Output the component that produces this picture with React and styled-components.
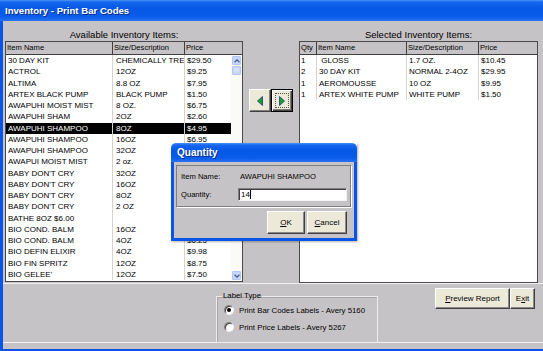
import React from "react";
import styled, { createGlobalStyle } from "styled-components";

const GlobalStyle = createGlobalStyle`
  html, body {
    margin: 0;
    padding: 0;
    background: #c6c3c6;
  }
  body {
    font-family: "Liberation Sans", Arial, sans-serif;
  }
`;

const XP_BLUE = "#0b55e6";

const Window = styled.div`
  position: relative;
  width: 543px;
  height: 351px;
  display: flex;
  flex-direction: column;
  background: #c6c3c6;
  overflow: hidden;
`;

const TitleBar = styled.div`
  height: 21px;
  flex: none;
  display: flex;
  align-items: center;
  padding-left: 5px;
  background: linear-gradient(
    to bottom,
    #4a96fa 0,
    #1767ee 2px,
    #0558e6 40%,
    #0a5ceb 80%,
    #2b72f0 100%
  );
  color: #fff;
  font: bold 9.6px "Liberation Sans", Arial, sans-serif;
  text-shadow: 1px 1px 0 #0a2c84;
`;

const Body = styled.div`
  flex: 1;
  display: flex;
  flex-direction: column;
  border-left: 3px solid ${XP_BLUE};
  border-bottom: 2px solid ${XP_BLUE};
  padding-bottom: 6px;
`;

const TopArea = styled.div`
  height: 262px;
  display: grid;
  grid-template-columns: 238px 56px 239px;
  padding-left: 2px;
`;

const Panel = styled.div`
  display: flex;
  flex-direction: column;
`;

const Caption = styled.div`
  height: 20px;
  box-sizing: border-box;
  display: flex;
  align-items: flex-end;
  justify-content: center;
  padding-bottom: 1.5px;
  font-size: 9.5px;
  line-height: 11px;
  color: #000;
`;

const ListBox = styled.div`
  height: ${(p) => p.$h}px;
  box-sizing: border-box;
  border: 1px solid #4a4a4a;
  background: #fff;
  display: flex;
  flex-direction: column;
  overflow: hidden;
`;

const HeaderRow = styled.div`
  display: grid;
  grid-template-columns: ${(p) => p.$cols};
  height: 13px;
  box-sizing: border-box;
  background: #c6c3c6;
  border-bottom: 1px solid #404040;
  flex: none;
`;

const HeaderCell = styled.div`
  border-right: 1px solid #404040;
  font-size: 7.6px;
  line-height: 12px;
  padding-left: 1px;
  white-space: nowrap;
  overflow: hidden;
  &:last-child {
    border-right: none;
  }
`;

const ListMain = styled.div`
  flex: 1;
  display: flex;
  min-height: 0;
`;

const Rows = styled.div`
  flex: 1;
  display: flex;
  flex-direction: column;
`;

const Row = styled.div`
  display: grid;
  grid-template-columns: ${(p) => p.$cols};
  height: 11.25px;
  flex: none;
  background: ${(p) => (p.$selected ? "#000" : "transparent")};
  color: ${(p) => (p.$selected ? "#fff" : "#000")};
`;

const Cell = styled.div`
  font-size: 8px;
  line-height: 11.25px;
  padding-left: ${(p) => p.$pad ?? 2}px;
  white-space: pre;
  overflow: hidden;
  border-right: 1px solid #d6d3ce;
  &:last-child {
    border-right: none;
  }
`;

const ScrollBar = styled.div`
  width: 11px;
  flex: none;
  background: #fafaf6;
  display: flex;
  flex-direction: column;
  align-items: center;
  padding: 1px 0;
  box-sizing: border-box;
`;

const ScrollBtn = styled.div`
  width: 9px;
  height: 9px;
  box-sizing: border-box;
  border: 1px solid #b4c6f2;
  border-radius: 1px;
  background: #c6d6fc;
  display: flex;
  align-items: center;
  justify-content: center;
  margin-top: ${(p) => p.$mt || 0}px;
`;

const Track = styled.div`
  flex: 1;
`;

const Middle = styled.div`
  display: flex;
  justify-content: center;
  align-items: flex-start;
  padding-top: 68px;
`;

const ArrowButton = styled.div`
  position: relative;
  width: 22px;
  height: 23px;
  box-sizing: border-box;
  background: #ece9d8;
  display: flex;
  align-items: center;
  justify-content: center;
  border: 1px solid;
  border-color: ${(p) => (p.$focused ? "#000" : "#fff #404040 #404040 #fff")};
  box-shadow: ${(p) =>
    p.$focused
      ? "inset 1px 1px #fff, inset -1px -1px #404040, inset -2px -2px #808080"
      : "inset -1px -1px #808080"};
  ${(p) =>
    p.$focused &&
    `&::after {
      content: "";
      position: absolute;
      inset: 3px;
      border: 1px dotted #555;
    }`}
`;

const BottomPanel = styled.div`
  height: 58px;
  border-top: 1px solid #f2f2f2;
  border-bottom: 1px solid #f2f2f2;
  display: flex;
  align-items: flex-start;
`;

const GroupBox = styled.fieldset`
  margin: 7px 0 0 213px;
  width: 162px;
  height: 52px;
  box-sizing: border-box;
  border: 1px solid #ededed;
  box-shadow: inset 1px 1px 0 #a9a6a9;
  padding: 4px 0 0 7px;
  display: flex;
  flex-direction: column;
  gap: 7px;
`;

const Legend = styled.legend`
  font-size: 7.8px;
  line-height: 10px;
  padding: 0 1px;
  margin-left: -2px;
`;

const RadioRow = styled.div`
  display: flex;
  align-items: center;
  gap: 5px;
  height: 10px;
  font-size: 7.8px;
`;

const Radio = styled.span`
  width: 10px;
  height: 10px;
  box-sizing: border-box;
  border-radius: 50%;
  background: #fff;
  border: 1px solid;
  border-color: #808080 #f4f4f4 #f4f4f4 #808080;
  box-shadow: inset 1px 1px #404040;
  display: flex;
  align-items: center;
  justify-content: center;
  &::after {
    content: "";
    width: 4px;
    height: 4px;
    border-radius: 50%;
    background: ${(p) => (p.$checked ? "#000" : "transparent")};
  }
`;

const ButtonGroup = styled.div`
  display: flex;
  margin: 4px 8px 0 auto;
`;

const Button = styled.div`
  width: ${(p) => p.$w}px;
  height: ${(p) => p.$h || 21}px;
  box-sizing: border-box;
  background: #ece9d8;
  border: 1px solid;
  border-color: #fff #404040 #404040 #fff;
  box-shadow: inset -1px -1px #8a8a8a;
  display: flex;
  align-items: center;
  justify-content: center;
  font-size: 8px;
  color: #000;
  u {
    text-decoration: underline;
  }
`;

const Dialog = styled.div`
  position: absolute;
  left: 171px;
  top: 143px;
  width: 186px;
  height: 98px;
  display: flex;
  flex-direction: column;
  box-shadow: 1px 1px 2px rgba(0, 0, 0, 0.3);
`;

const DialogTitle = styled.div`
  height: 19px;
  flex: none;
  display: flex;
  align-items: center;
  padding-left: 6px;
  border-radius: 5px 5px 0 0;
  background: linear-gradient(
    to bottom,
    #4a96fa 0,
    #1767ee 2px,
    #0558e6 40%,
    #0a5ceb 80%,
    #2b72f0 100%
  );
  color: #fff;
  font: bold 10px "Liberation Sans", Arial, sans-serif;
  text-shadow: 1px 1px 0 #0a2c84;
`;

const DialogBody = styled.div`
  flex: 1;
  background: #c6c3c6;
  border: 3px solid ${XP_BLUE};
  border-top: none;
  display: flex;
  flex-direction: column;
  padding: 3px 2px 0 2px;
`;

const FieldsPanel = styled.div`
  border: 1px solid;
  border-color: #808080 #fff #fff #808080;
  box-shadow: inset -1px -1px #808080;
  padding: 5px 0 6px 4px;
  display: flex;
  flex-direction: column;
  gap: 6px;
`;

const FieldRow = styled.div`
  display: grid;
  grid-template-columns: 57px 109px;
  align-items: center;
  height: ${(p) => p.$h}px;
  font-size: 7.6px;
`;

const FieldValue = styled.div`
  padding-left: 2px;
`;

const TextInput = styled.div`
  height: 13px;
  box-sizing: border-box;
  background: #fff;
  border: 1px solid;
  border-color: #808080 #f4f4f4 #f4f4f4 #808080;
  box-shadow: inset 1px 1px #404040;
  padding-left: 2px;
  font-size: 8px;
  line-height: 11px;
  display: flex;
  align-items: center;
`;

const Caret = styled.span`
  display: inline-block;
  width: 1px;
  height: 9px;
  background: #000;
  margin-left: 0.5px;
`;

const DialogButtons = styled.div`
  display: flex;
  justify-content: flex-end;
  gap: 2px;
  padding: 3px 5px 0 0;
`;

const leftCols = "107px 72px 45px";
const leftHead = "107px 72px 1fr";
const rightCols = "17px 90px 72px 1fr";

// prices of the rows hidden behind the Quantity dialog are left blank
const available = [
  ["30 DAY KIT", "CHEMICALLY TREA", "$29.50"],
  ["ACTROL", "12OZ", "$9.25"],
  ["ALTIMA", "8.8 OZ", "$7.95"],
  ["ARTEX BLACK PUMP", "BLACK PUMP", "$1.50"],
  ["AWAPUHI MOIST MIST", "8 OZ.", "$6.75"],
  ["AWAPUHI SHAM", "2OZ", "$2.60"],
  ["AWAPUHI SHAMPOO", "8OZ", "$4.95"],
  ["AWAPUHI SHAMPOO", "16OZ", "$6.95"],
  ["AWAPUHI SHAMPOO", "32OZ", ""],
  ["AWAPUI MOIST MIST", "2 oz.", ""],
  ["BABY DON'T CRY", "32OZ", ""],
  ["BABY DON'T CRY", "16OZ", ""],
  ["BABY DON'T CRY", "8OZ", ""],
  ["BABY DON'T CRY", "2 OZ", ""],
  ["BATHE 8OZ $6.00", "", ""],
  ["BIO COND. BALM", "16OZ", ""],
  ["BIO COND. BALM", "4OZ", "$6.25"],
  ["BIO DEFIN ELIXIR", "4OZ", "$9.98"],
  ["BIO FIN SPRITZ", "12OZ", "$8.75"],
  ["BIO GELEE'", "12OZ", "$7.50"],
];

const selected = [
  ["1", " GLOSS", "1.7 OZ.", "$10.45"],
  ["2", "30 DAY KIT", "NORMAL 2-4OZ", "$29.95"],
  ["1", "AEROMOUSSE", "10 OZ", "$9.95"],
  ["1", "ARTEX WHITE PUMP", "WHITE PUMP", "$1.50"],
];

const Chevron = ({ down }) => (
  <svg width="6" height="4" viewBox="0 0 6 4">
    <path
      d={down ? "M0.6 0.8 L3 3.2 L5.4 0.8" : "M0.6 3.2 L3 0.8 L5.4 3.2"}
      fill="none"
      stroke="#4d6185"
      strokeWidth="1.3"
    />
  </svg>
);

const Thumb = () => (
  <ScrollBtn $mt={1}>
    <svg width="5" height="5" viewBox="0 0 5 5">
      <path d="M0 1h5M0 3h5" stroke="#e8eeff" strokeWidth="0.8" />
    </svg>
  </ScrollBtn>
);

const Triangle = ({ dir }) => (
  <svg width="6" height="10" viewBox="0 0 6 10">
    <polygon
      points={dir === "left" ? "5.5,0.5 5.5,9.5 0.5,5" : "0.5,0.5 0.5,9.5 5.5,5"}
      fill="#1b9c2b"
      stroke="#143f7a"
      strokeWidth="0.8"
    />
  </svg>
);

export default function App() {
  return (
    <>
      <GlobalStyle />
      <Window>
        <TitleBar>Inventory - Print Bar Codes</TitleBar>
        <Body>
          <TopArea>
            <Panel>
              <Caption>Available Inventory Items:</Caption>
              <ListBox $h={241}>
                <HeaderRow $cols={leftHead}>
                  <HeaderCell>Item Name</HeaderCell>
                  <HeaderCell>Size/Description</HeaderCell>
                  <HeaderCell>Price</HeaderCell>
                </HeaderRow>
                <ListMain>
                  <Rows>
                    {available.map((r, i) => (
                      <Row key={i} $cols={leftCols} $selected={i === 6}>
                        <Cell>{r[0]}</Cell>
                        <Cell $pad={3}>{r[1]}</Cell>
                        <Cell>{r[2]}</Cell>
                      </Row>
                    ))}
                  </Rows>
                  <ScrollBar>
                    <ScrollBtn>
                      <Chevron />
                    </ScrollBtn>
                    <Thumb />
                    <Track />
                    <ScrollBtn>
                      <Chevron down />
                    </ScrollBtn>
                  </ScrollBar>
                </ListMain>
              </ListBox>
            </Panel>

            <Middle>
              <ArrowButton>
                <Triangle dir="left" />
              </ArrowButton>
              <ArrowButton $focused>
                <Triangle dir="right" />
              </ArrowButton>
            </Middle>

            <Panel>
              <Caption>Selected Inventory Items:</Caption>
              <ListBox $h={242}>
                <HeaderRow $cols={rightCols}>
                  <HeaderCell>Qty</HeaderCell>
                  <HeaderCell>Item Name</HeaderCell>
                  <HeaderCell>Size/Description</HeaderCell>
                  <HeaderCell>Price</HeaderCell>
                </HeaderRow>
                <Rows>
                  {selected.map((r, i) => (
                    <Row key={i} $cols={rightCols}>
                      <Cell $pad={1}>{r[0]}</Cell>
                      <Cell>{r[1]}</Cell>
                      <Cell>{r[2]}</Cell>
                      <Cell>{r[3]}</Cell>
                    </Row>
                  ))}
                </Rows>
              </ListBox>
            </Panel>
          </TopArea>

          <BottomPanel>
            <GroupBox>
              <Legend>Label Type</Legend>
              <RadioRow>
                <Radio $checked />
                Print Bar Codes Labels - Avery 5160
              </RadioRow>
              <RadioRow>
                <Radio />
                Print Price Labels - Avery 5267
              </RadioRow>
            </GroupBox>
            <ButtonGroup>
              <Button $w={75}>
                <u>P</u>review Report
              </Button>
              <Button $w={25}>
                E<u>x</u>it
              </Button>
            </ButtonGroup>
          </BottomPanel>
        </Body>

        <Dialog>
          <DialogTitle>Quantity</DialogTitle>
          <DialogBody>
            <FieldsPanel>
              <FieldRow $h={11}>
                <span>Item Name:</span>
                <FieldValue>AWAPUHI SHAMPOO</FieldValue>
              </FieldRow>
              <FieldRow $h={13}>
                <span>Quantity:</span>
                <TextInput>
                  14
                  <Caret />
                </TextInput>
              </FieldRow>
            </FieldsPanel>
            <DialogButtons>
              <Button $w={38} $h={23}>
                <u>O</u>K
              </Button>
              <Button $w={40} $h={23}>
                <u>C</u>ancel
              </Button>
            </DialogButtons>
          </DialogBody>
        </Dialog>
      </Window>
    </>
  );
}
